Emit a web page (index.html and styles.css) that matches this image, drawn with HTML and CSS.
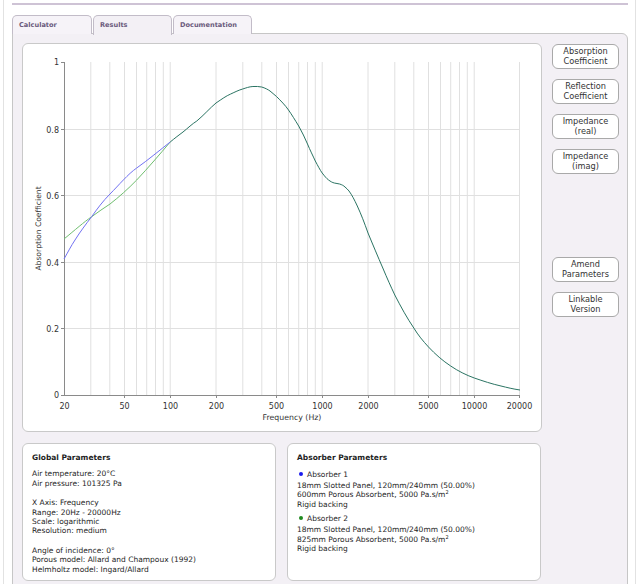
FILE: index.html
```html
<!DOCTYPE html>
<html>
<head>
<meta charset="utf-8">
<link rel="stylesheet" href="styles.css">
</head>
<body>
<div class="frame">
  <div class="topline"></div>
  <div class="tabs">
    <div class="tab">Calculator</div>
    <div class="tab active">Results</div>
    <div class="tab">Documentation</div>
  </div>
  <div class="panel">
    <div class="main">
      <div class="chart">
        <svg width="518" height="387" viewBox="23 44 518 387" xmlns="http://www.w3.org/2000/svg">
          <g class="grid">
            <line x1="90.8" y1="62" x2="90.8" y2="395"/>
            <line x1="109.8" y1="62" x2="109.8" y2="395"/>
            <line x1="124.5" y1="62" x2="124.5" y2="395"/>
            <line x1="136.5" y1="62" x2="136.5" y2="395"/>
            <line x1="146.7" y1="62" x2="146.7" y2="395"/>
            <line x1="155.5" y1="62" x2="155.5" y2="395"/>
            <line x1="163.3" y1="62" x2="163.3" y2="395"/>
            <line x1="170.2" y1="62" x2="170.2" y2="395"/>
            <line x1="216" y1="62" x2="216" y2="395"/>
            <line x1="242.8" y1="62" x2="242.8" y2="395"/>
            <line x1="261.8" y1="62" x2="261.8" y2="395"/>
            <line x1="276.5" y1="62" x2="276.5" y2="395"/>
            <line x1="288.5" y1="62" x2="288.5" y2="395"/>
            <line x1="298.7" y1="62" x2="298.7" y2="395"/>
            <line x1="307.5" y1="62" x2="307.5" y2="395"/>
            <line x1="315.3" y1="62" x2="315.3" y2="395"/>
            <line x1="322.2" y1="62" x2="322.2" y2="395"/>
            <line x1="368" y1="62" x2="368" y2="395"/>
            <line x1="394.8" y1="62" x2="394.8" y2="395"/>
            <line x1="413.8" y1="62" x2="413.8" y2="395"/>
            <line x1="428.5" y1="62" x2="428.5" y2="395"/>
            <line x1="440.5" y1="62" x2="440.5" y2="395"/>
            <line x1="450.7" y1="62" x2="450.7" y2="395"/>
            <line x1="459.5" y1="62" x2="459.5" y2="395"/>
            <line x1="467.3" y1="62" x2="467.3" y2="395"/>
            <line x1="474.2" y1="62" x2="474.2" y2="395"/>
            <line x1="519.5" y1="62" x2="519.5" y2="395"/>
            <line x1="64" y1="129.5" x2="520" y2="129.5"/>
            <line x1="64" y1="195.5" x2="520" y2="195.5"/>
            <line x1="64" y1="262.5" x2="520" y2="262.5"/>
            <line x1="64" y1="328.5" x2="520" y2="328.5"/>
          </g>
          <g class="axis">
            <line x1="64.5" y1="62" x2="64.5" y2="395.5"/>
            <line x1="64" y1="395.5" x2="520" y2="395.5"/>
            <line x1="61" y1="62.5" x2="64" y2="62.5"/>
            <line x1="61" y1="129.5" x2="64" y2="129.5"/>
            <line x1="61" y1="195.5" x2="64" y2="195.5"/>
            <line x1="61" y1="262.5" x2="64" y2="262.5"/>
            <line x1="61" y1="328.5" x2="64" y2="328.5"/>
            <line x1="61" y1="395.5" x2="64" y2="395.5"/>
            <line x1="124.5" y1="395" x2="124.5" y2="398"/>
            <line x1="170.5" y1="395" x2="170.5" y2="398"/>
            <line x1="216.5" y1="395" x2="216.5" y2="398"/>
            <line x1="276.5" y1="395" x2="276.5" y2="398"/>
            <line x1="322.5" y1="395" x2="322.5" y2="398"/>
            <line x1="368.5" y1="395" x2="368.5" y2="398"/>
            <line x1="428.5" y1="395" x2="428.5" y2="398"/>
            <line x1="474.5" y1="395" x2="474.5" y2="398"/>
            <line x1="519.5" y1="395" x2="519.5" y2="398"/>
          </g>
          <g class="ylabels">
            <text x="59" y="65">1</text>
            <text x="59" y="132.5">0.8</text>
            <text x="59" y="198.5">0.6</text>
            <text x="59" y="265.5">0.4</text>
            <text x="59" y="331.5">0.2</text>
            <text x="59" y="398">0</text>
          </g>
          <g class="xlabels">
            <text x="64.5" y="408.5">20</text>
            <text x="124.5" y="408.5">50</text>
            <text x="170.5" y="408.5">100</text>
            <text x="216.5" y="408.5">200</text>
            <text x="276.5" y="408.5">500</text>
            <text x="322.5" y="408.5">1000</text>
            <text x="368.5" y="408.5">2000</text>
            <text x="428.5" y="408.5">5000</text>
            <text x="474.5" y="408.5">10000</text>
            <text x="519.5" y="408.5">20000</text>
          </g>
          <text class="xtitle" x="292" y="420">Frequency (Hz)</text>
          <text class="ytitle" transform="translate(41 228.5) rotate(-90)">Absorption Coefficient</text>
          <path class="c-green" d="M64,239 C75,230 84,222 91.7,216.7 C98,212 104,208 110,204 C119,197 128,189 136.7,180 C148,168 160,154 170.2,142"/>
          <path class="c-blue" d="M64,259 C68,252 71,246 75,240 C80,232 86,224 91.7,216.7 C97,209 103,201 110,194 C119,185 128,174 136.7,168 C148,160 160,150 170.2,142"/>
          <path class="c-both" d="M170.2,142 C175,138 179,135 183,132 C188,128 192,124 196.8,121 C204,115 210,108 216,103 C222,99 226,96 230.7,94 C235,92 239,90 242.7,89 C246,88 249,86.7 252.9,86.5 C256,86.3 259,86.5 261.7,87 C265,88 268,89.5 270,91 C272,92.5 274,94.5 276.5,96.5 C281,101 285,105 288.5,110 C292,115 295,120 298.7,126 C302,132 305,138 307.5,144 C310,150 313,156 315.3,161 C318,166 320,170 322.2,173 C324.5,176 326.5,178.5 328.6,180 C330.5,181.5 332.5,182.6 334.3,183 C336,183.4 338,183.6 339.6,184 C342,184.8 343.5,185.5 345,187 C346.5,188.3 347.8,189.5 349,191 C352,195 354.5,200 357.3,206 C361,214 364.5,223 368,233 C373,245 378,257 382.8,268 C387,278 391,287 394.8,295 C401,307 407,318 413.8,328 C418,335 423,341 428.5,347 C435,354 443,361 450.7,366 C458,371 466,375 474.3,378 C483,381 492,384 501,386 C507,387.5 513,389 520,390"/>
        </svg>
      </div>
      <div class="buttons">
        <div class="btn">Absorption<br>Coefficient</div>
        <div class="btn">Reflection<br>Coefficient</div>
        <div class="btn">Impedance<br>(real)</div>
        <div class="btn">Impedance<br>(imag)</div>
        <div class="btn spaced">Amend<br>Parameters</div>
        <div class="btn">Linkable<br>Version</div>
      </div>
    </div>
    <div class="info">
      <div class="box">
        <div class="box-title">Global Parameters</div>
        <p>Air temperature: 20°C<br>Air pressure: 101325 Pa</p>
        <p>X Axis: Frequency<br>Range: 20Hz - 20000Hz<br>Scale: logarithmic<br>Resolution: medium</p>
        <p>Angle of incidence: 0°<br>Porous model: Allard and Champoux (1992)<br>Helmholtz model: Ingard/Allard</p>
      </div>
      <div class="box abs-box">
        <div class="box-title">Absorber Parameters</div>
        <div class="absorber">
          <div class="abs-head"><span class="dot blue"></span>Absorber 1</div>
          <div>18mm Slotted Panel, 120mm/240mm (50.00%)<br>600mm Porous Absorbent, 5000 Pa.s/m<sup>2</sup><br>Rigid backing</div>
        </div>
        <div class="absorber">
          <div class="abs-head"><span class="dot green"></span>Absorber 2</div>
          <div>18mm Slotted Panel, 120mm/240mm (50.00%)<br>825mm Porous Absorbent, 5000 Pa.s/m<sup>2</sup><br>Rigid backing</div>
        </div>
      </div>
    </div>
  </div>
</div>
</body>
</html>
```
FILE: styles.css
```css
* { box-sizing: border-box; }
html, body { margin: 0; padding: 0; background: #fff; }
body {
  font-family: "DejaVu Sans", Verdana, sans-serif;
  font-size: 7.5px;
  color: #1e1e1e;
  overflow: hidden;
  height: 584px;
}
.frame {
  margin-left: 3px;
  width: 633px;
  height: 584px;
  border-left: 1px solid #e2e2e2;
  border-right: 1px solid #e2e2e2;
  padding: 3px 7px 0 8px;
}
.topline {
  height: 2px;
  background: #cec3d5;
}
.tabs {
  display: flex;
  gap: 1px;
  margin-top: 10px;
  height: 19px;
}
.tab {
  width: 80px;
  height: 19px;
  border: 1px solid #c2bcc8;
  border-bottom: none;
  border-radius: 5px 5px 0 0;
  background: #f6f3f8;
  color: #6a5a7c;
  font-weight: bold;
  font-size: 6.6px;
  padding: 5px 0 0 6px;
}
.tab.active {
  width: 79px;
  background: #f3f0f5;
  height: 20px;
  position: relative;
  z-index: 1;
}
.tab:last-child { width: 79px; }
.panel {
  margin-top: -1px;
  border: 1px solid #c6c6c6;
  border-radius: 0 6px 0 0;
  background: #f3f0f5;
  padding: 9px 8px 0 9px;
  height: 560px;
}
.main {
  display: grid;
  grid-template-columns: 520px 67px;
  column-gap: 10px;
}
.chart {
  height: 389px;
  background: #fff;
  border: 1px solid #c9c9c9;
  border-radius: 6px;
}
.chart svg { display: block; }
.grid line { stroke: #e0e0e0; stroke-width: 1; }
.axis line { stroke: #8a8a8a; stroke-width: 1; }
.ylabels text, .xlabels text, .xtitle, .ytitle {
  font-family: "DejaVu Sans", Verdana, sans-serif;
  font-size: 8px;
  fill: #333;
}
.ylabels text { text-anchor: end; }
.xlabels text, .xtitle { text-anchor: middle; }
.ytitle { text-anchor: middle; font-size: 7.6px; }
.xtitle { font-size: 7.8px; }
.c-green, .c-blue, .c-both { fill: none; stroke-width: 1; }
.c-green { stroke: #6fbe6f; }
.c-blue { stroke: #7272f2; }
.c-both { stroke: #2b7463; }
.buttons {
  display: flex;
  flex-direction: column;
  gap: 10px;
  padding-top: 1px;
}
.btn {
  height: 25px;
  background: #fff;
  border: 1px solid #a9a9a9;
  border-radius: 6px;
  text-align: center;
  font-size: 8.2px;
  line-height: 9.6px;
  padding-top: 2px;
  color: #333;
}
.btn.spaced { margin-top: 73px; }
.info {
  display: grid;
  grid-template-columns: 254px 254px;
  column-gap: 11px;
  margin-top: 11px;
}
.box {
  height: 138px;
  background: #fff;
  border: 1px solid #c9c9c9;
  border-radius: 6px;
  padding: 9px 9px;
  line-height: 9.4px;
}
.box-title {
  font-weight: bold;
  margin-bottom: 7px;
}
.box p { margin: 0 0 10px 0; }
.abs-box { line-height: 9.8px; }
.absorber { margin-bottom: 4px; }
.abs-head { margin-bottom: 1px; }
.dot {
  display: inline-block;
  width: 4px;
  height: 4px;
  border-radius: 50%;
  margin: 0 4px 1px 2px;
  vertical-align: middle;
}
.dot.blue { background: #1a1aee; }
.dot.green { background: #1f8a1f; }
sup { font-size: 5px; line-height: 0; vertical-align: 3px; }
```
